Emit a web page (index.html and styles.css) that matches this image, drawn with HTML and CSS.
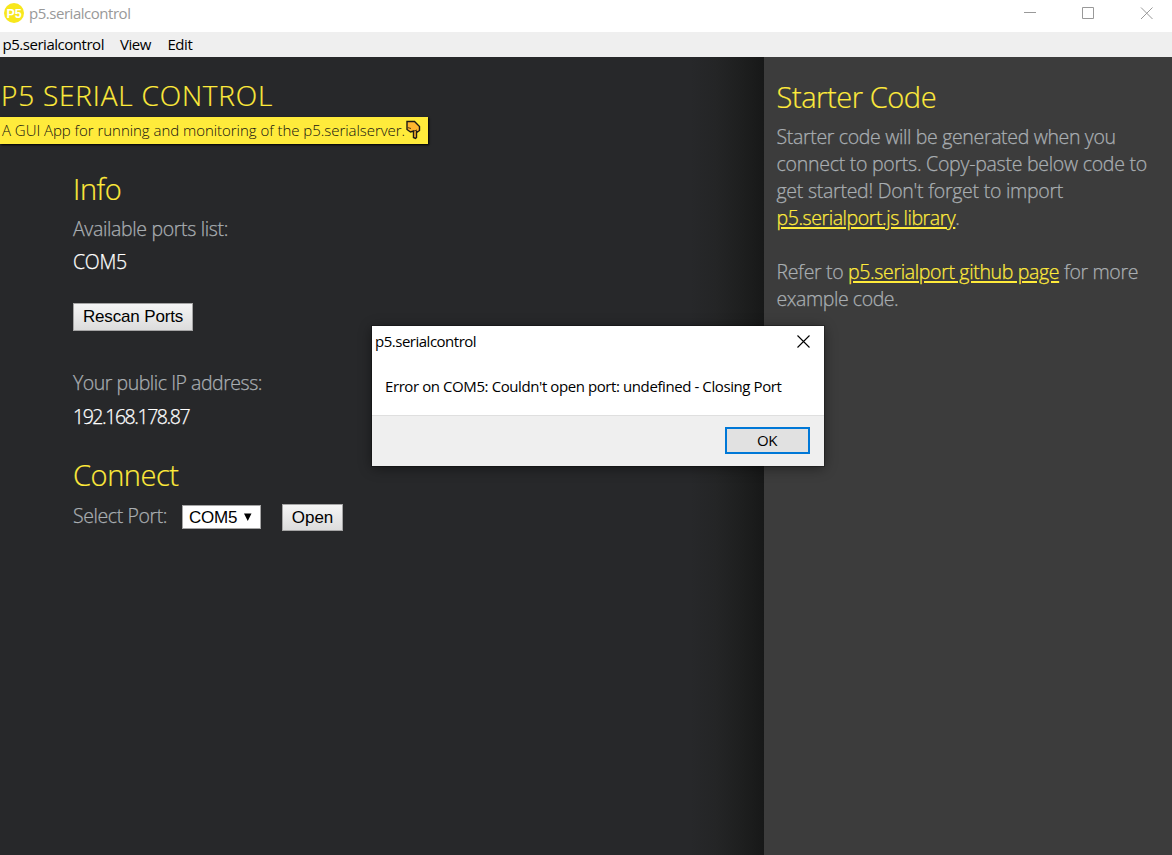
FILE: index.html
```html
<!DOCTYPE html>
<html lang="en">
<head>
<meta charset="utf-8">
<title>p5.serialcontrol</title>
<link rel="stylesheet" href="styles.css">
</head>
<body>
<header class="titlebar">
  <svg class="logo" width="20" height="20" viewBox="0 0 20 20"><circle cx="10" cy="10" r="10" fill="#f8e71c"/><text x="2.500" y="14.500" class="logo-text">P5</text></svg>
  <span class="window-title">p5.serialcontrol</span>
  <svg class="window-controls" width="148" height="26" viewBox="0 0 148 26" fill="none" stroke="#999"><path d="M0 12.500h12M58.500 7.500h11v11h-11zM117 7.500l11.500 11.500M128.500 7.500l-11.500 11.500"/></svg>
</header>
<nav class="menubar"><span class="menu-app">p5.serialcontrol</span><span class="menu-view">View</span><span class="menu-edit">Edit</span></nav>
<div class="content">
  <main class="main">
    <h1 class="app-title">P5 SERIAL CONTROL</h1>
    <p class="tagline"><span class="tagline-text">A GUI App for running and monitoring of the p5.serialserver.</span><svg class="hand" width="16" height="20" viewBox="0 0 16 20"><path d="M2 1.500H9.500L14.500 6.500V10.500L12.500 12L11.500 11.500V17.500L10.500 18.500L8.500 17.500V11L5.500 12L2 9.500Z" fill="#ffb52e" stroke="#1c1a15" stroke-width="1.400" stroke-linejoin="miter"/><path d="M2.500 7.500L6 8.500M9 11l3-1" stroke="#553b14" fill="none"/></svg></p>
    <div class="panel">
      <h2 class="heading info">Info</h2>
      <p class="label ports">Available ports list:</p>
      <p class="value com">COM5</p>
      <button class="button rescan">Rescan Ports</button>
      <p class="label address">Your public IP address:</p>
      <p class="value ip">192.168.178.87</p>
      <h2 class="heading connect">Connect</h2>
      <div class="port-row"><span class="label select-label">Select Port:</span><span class="select"><span>COM5</span><svg width="8" height="9" viewBox="0 0 8 9"><path d="M0 .5h7.500L3.750 8z"/></svg></span><button class="button open">Open</button></div>
    </div>
  </main>
  <aside class="sidebar">
    <h2 class="heading starter">Starter Code</h2>
    <p class="copy"><span class="tight">Starter code will be generated when you</span><br>connect to ports. Copy-paste below code to<br>get started! Don't forget to import<br><span class="tighter"><a class="link">p5.serialport.js library</a>.</span></p>
    <p class="copy refer"><span class="tight">Refer to <a class="link">p5.serialport github page</a> for more</span><br><span class="tighter">example code.</span></p>
  </aside>
</div>
<section class="dialog">
  <div class="dialog-head"><span class="dialog-title">p5.serialcontrol</span><svg width="13" height="13" viewBox="0 0 13 13"><path d="M.5.5l12 12M12.500.5l-12 12" stroke="#000" stroke-width="1.100"/></svg></div>
  <p class="message">Error on COM5: Couldn't open port: undefined - Closing Port</p>
  <div class="dialog-foot"><button class="ok">OK</button></div>
</section>
</body>
</html>
```
FILE: styles.css
```css
* { box-sizing: border-box; }
html, body { margin: 0; height: 855px; overflow: hidden; }
body { display: flex; flex-direction: column; position: relative; font-family: "Open Sans", "Noto Sans", sans-serif; background: #27282a; }
h1, h2, p { margin: 0; white-space: nowrap; }
.titlebar { height: 32px; flex: none; display: flex; background: #fff; padding: 3px 0 0 4px; }
.logo { flex: none; }
.logo-text { font: 700 12.5px "Liberation Sans", sans-serif; fill: #fff; }
.window-title { margin-left: 5px; font-size: 15px; line-height: 20px; color: #999; letter-spacing: -0.47px; }
.window-controls { margin: -3px 0 0 auto; }
.menubar { height: 25px; flex: none; display: flex; background: #efefef; color: #000; font-size: 15px; line-height: 25px; letter-spacing: -0.47px; padding-left: 2.5px; }
.menu-app { width: 117.5px; }
.menu-view { width: 47.5px; }
.content { flex: 1; display: flex; min-height: 0; }
.main { width: 764px; background: linear-gradient(to right, #27282a 0, #27282a 690px, #242526 716px, #1d1e1e 744px, #171818 764px); padding-top: 21px; }
.app-title { font-size: 28px; font-weight: 300; line-height: 34px; color: #ffeb3b; letter-spacing: 0.8px; padding-left: 1px; height: 39px; -webkit-text-stroke: 0.2px; }
.tagline { width: 428px; height: 27px; display: flex; background: #ffeb3b; color: #111; font-size: 15px; font-weight: 300; line-height: 27px; padding-left: 2px; box-shadow: 1px 1px 2px #000; }
.tagline-text { width: 403px; letter-spacing: -0.04px; }
.hand { margin-top: 3px; }
.panel { padding-left: 73px; }
.heading { font-size: 29px; font-weight: 300; line-height: 40px; color: #ffeb3b; letter-spacing: -0.43px; -webkit-text-stroke: 0.2px; }
.info { margin-top: 25px; }
.label, .value, .copy { font-size: 19.5px; font-weight: 300; line-height: 27px; -webkit-text-stroke: 0.25px; }
.label { color: #a9aeb2; letter-spacing: -0.35px; }
.value { color: #fff; letter-spacing: -0.3px; }
.ports { margin-top: 6px; }
.com { margin-top: 6px; }
.button { display: block; font: 17px "Liberation Sans", Arial, sans-serif; border: 1px solid #a5a5a5; background: linear-gradient(#f5f5f5, #dcdcdc); color: #000; padding: 0; border-radius: 0; }
.rescan { width: 120px; height: 28px; margin-top: 28px; letter-spacing: -0.15px; }
.address { margin-top: 38px; letter-spacing: -0.47px; }
.ip { margin-top: 7px; letter-spacing: -1.45px; }
.connect { margin-top: 25px; }
.port-row { display: flex; margin-top: 8px; height: 28px; }
.select-label { width: 109px; margin-top: -1px; letter-spacing: -0.4px; }
.select { width: 79px; height: 24px; margin: 2px 21px 0 0; display: flex; align-items: center; justify-content: space-between; background: #fff; border: 1px solid #a5a5a5; padding: 1px 8px 0 6px; font: 17px "Liberation Sans", Arial, sans-serif; letter-spacing: -0.2px; }
.open { width: 61px; height: 27px; margin-top: 1px; }
.sidebar { flex: 1; background: #3c3c3c; padding: 20px 0 0 12.5px; }
.copy { color: #a9aeb2; letter-spacing: -0.26px; }
.tight { letter-spacing: -0.34px; }
.tighter { letter-spacing: -0.43px; }
.starter + .copy { margin-top: 6px; }
.refer { margin-top: 27px; }
.link { color: #ffeb3b; text-decoration: underline; text-decoration-thickness: 2px; text-underline-offset: 2px; }
.dialog { position: absolute; left: 372px; top: 326px; width: 452px; height: 140px; background: #fff; color: #000; box-shadow: 0 0 0 1px rgba(0,0,0,.25), 0 2px 12px rgba(0,0,0,.45); font-size: 15px; letter-spacing: -0.49px; }
.dialog-head { display: flex; justify-content: space-between; height: 45px; padding: 4px 14.5px 0 3px; line-height: 22px; }
.dialog-head svg { margin-top: 5px; }
.message { height: 44px; padding-left: 13px; line-height: 30px; letter-spacing: -0.41px; }
.dialog-foot { height: 51px; background: #efefef; border-top: 1px solid #dfdfdf; padding: 11px 14px 0 0; display: flex; justify-content: flex-end; }
.ok { width: 85px; height: 27px; border: 2px solid #0078d7; background: #e1e1e1; padding: 0 1px 2px 0; font: 15px "Open Sans", sans-serif; letter-spacing: -0.55px; }
```
